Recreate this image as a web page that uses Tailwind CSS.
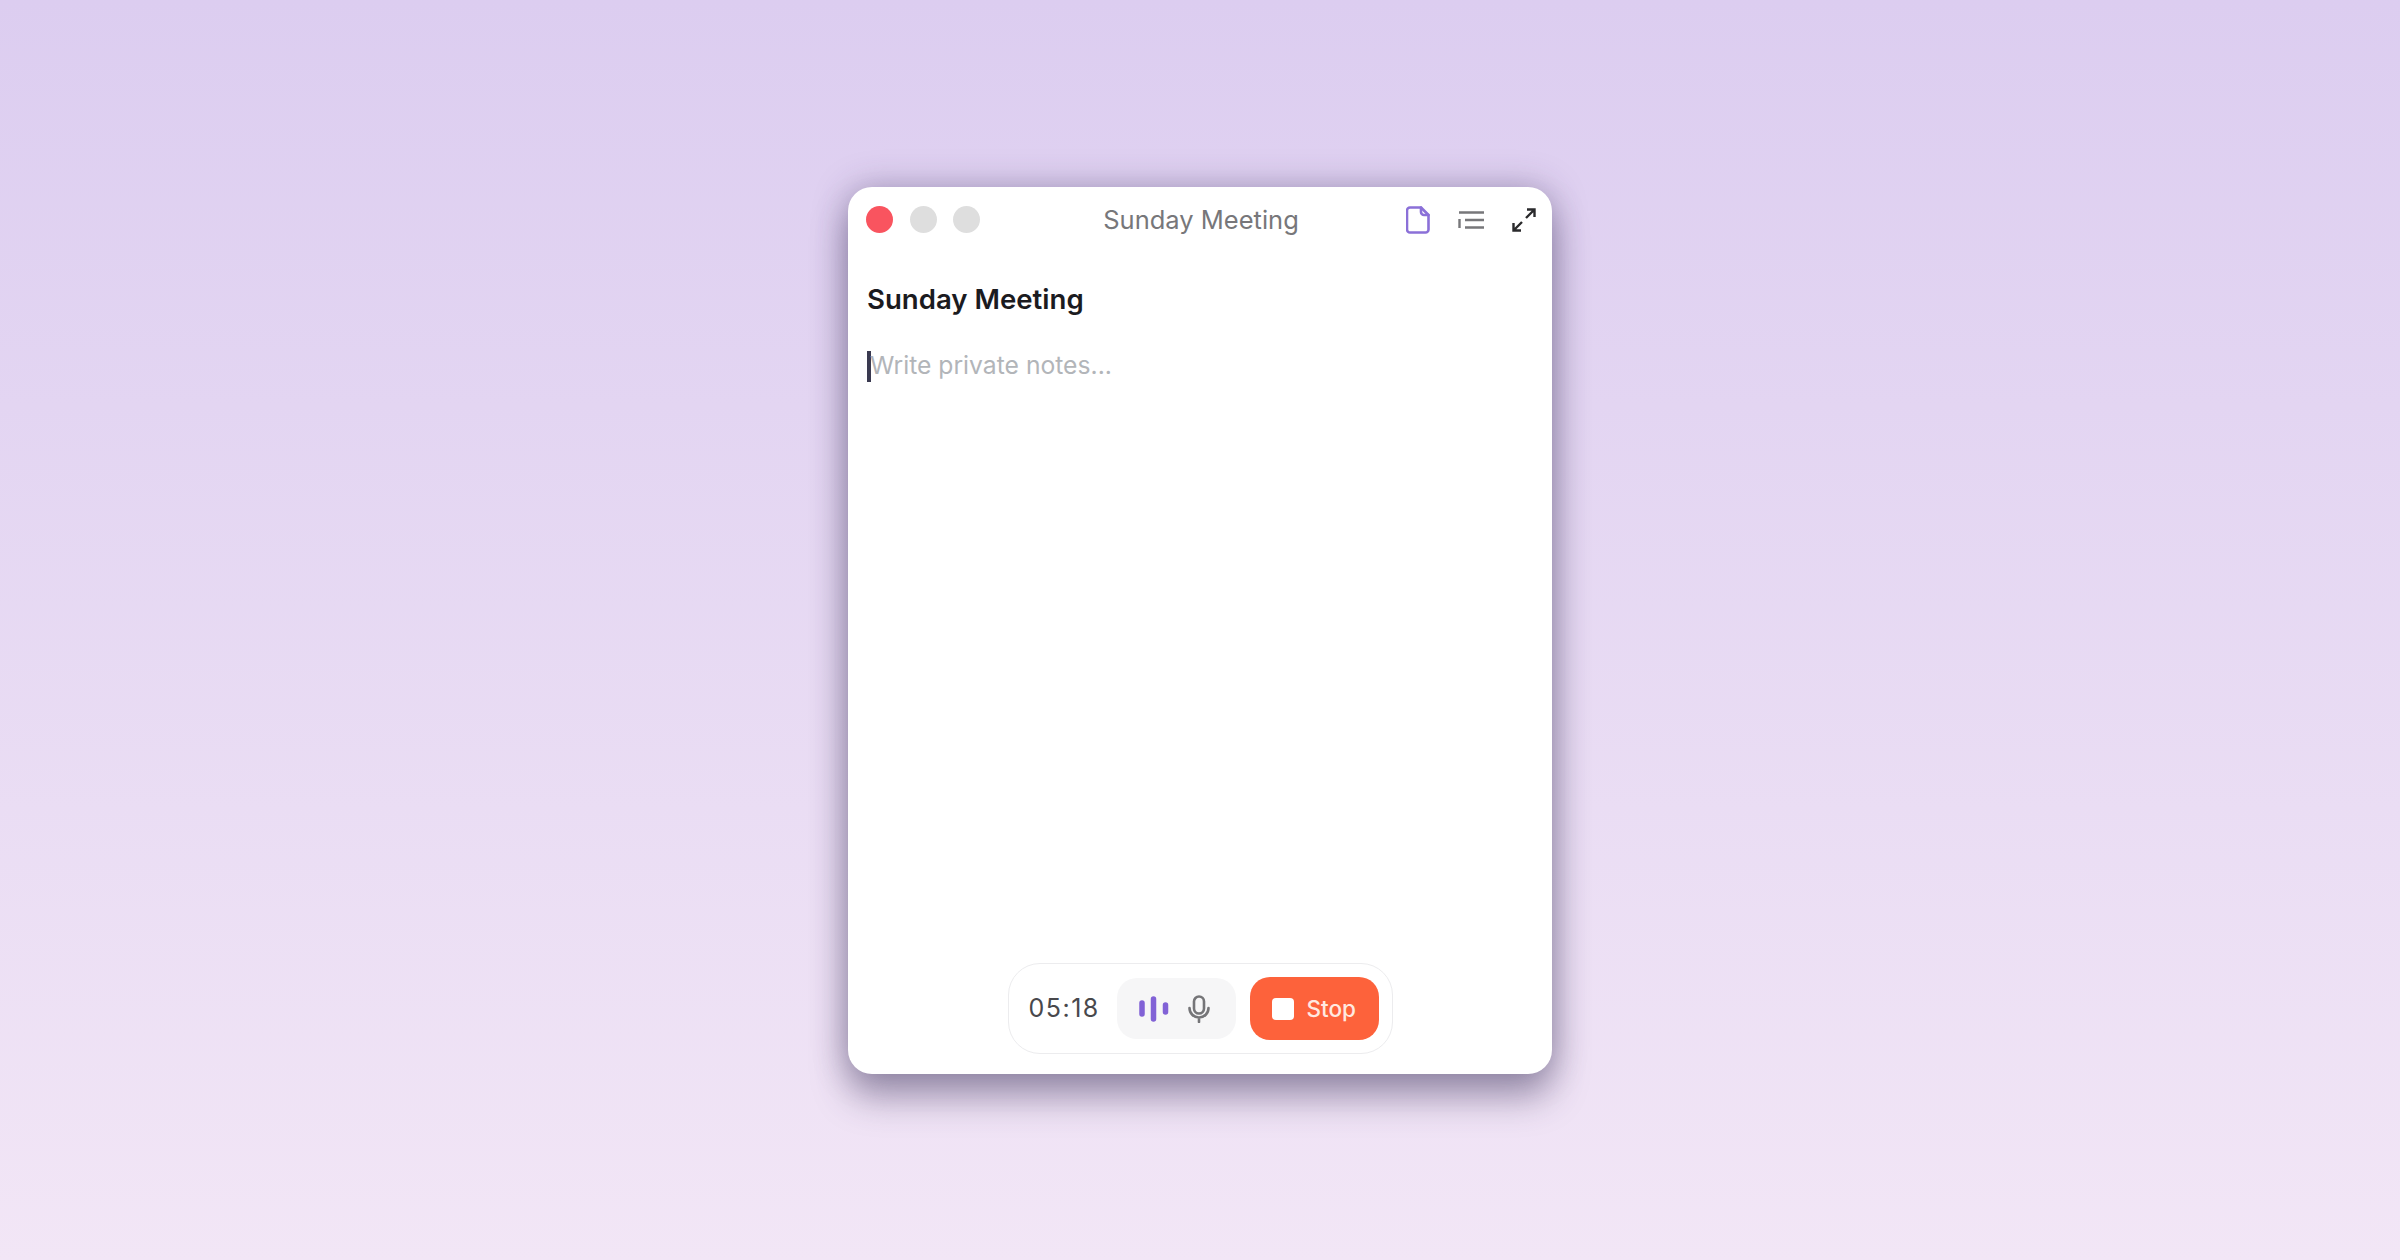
<!DOCTYPE html>
<html>
<head>
<meta charset="utf-8">
<script src="https://cdn.jsdelivr.net/npm/@tailwindcss/browser@4"></script>
</head>
<body class="m-0">
<div class="w-[2400px] h-[1260px] pt-[1px] flex items-center justify-center overflow-hidden bg-gradient-to-b from-[#dccdf0] to-[#f2e6f6] font-['Inter',sans-serif]">
  <div class="w-[704px] h-[887px] flex flex-col bg-white rounded-[24px] shadow-[0_24px_36px_rgba(60,50,90,0.4),0_0_34px_rgba(60,50,90,0.34)]">
    <div class="flex items-center h-[64px] pl-[18px] pr-[16px] shrink-0">
      <div class="flex-1 flex gap-[16px]">
        <div class="w-[27px] h-[27px] rounded-full bg-[#f9545f]"></div>
        <div class="w-[27px] h-[27px] rounded-full bg-[#dedede] ml-[0.5px]"></div>
        <div class="w-[27px] h-[27px] rounded-full bg-[#dedede]"></div>
      </div>
      <div class="text-center text-[25.5px] text-[#77777a] pt-[2px]">Sunday Meeting</div>
      <div class="flex-1 flex justify-end items-center gap-[28px] pt-[2px]">
        <svg width="24" height="28" viewBox="0 0 24 28" fill="none" stroke="#8b70d8" stroke-width="2.6" stroke-linejoin="round" stroke-linecap="round"><path d="M4 1.500h11l7.500 7.500v14.500a3 3 0 0 1-3 3H4a3 3 0 0 1-3-3V4.500a3 3 0 0 1 3-3z"/><path d="M15 1.500v4.500a3 3 0 0 0 3 3h4.500"/></svg>
        <svg width="26" height="18" viewBox="0 0 26 18" fill="none" stroke="#77777a" stroke-width="2.4"><path d="M1 1.500h25M7 9h19M7 16.500h19M1.500 8v9"/></svg>
        <svg width="24" height="24" viewBox="0 0 24 24" fill="none" stroke="#2a2a2c" stroke-width="2.400"><path d="M14 10 23 1M15 1.500h7.500V9M10 14l-9 9M1.500 15v7.500H9"/></svg>
      </div>
    </div>
    <div class="flex-1 px-[19px] pt-[28px]">
      <div class="text-[27.6px] leading-[40px] font-semibold text-[#1b1b1f]">Sunday Meeting</div>
      <div class="flex items-center mt-[31px] h-[32px]">
        <div class="w-[4px] h-[31px] bg-[#3a3a50]"></div>
        <div class="text-[24.7px] text-[#b2b5b9] -ml-[1px]">Write private notes...</div>
      </div>
    </div>
    <div class="flex justify-center pb-[20px]">
      <div class="flex items-center w-[385px] h-[91px] border border-[#ececee] rounded-[32px] pl-[20px]">
        <div class="text-[25px] text-[#48484c] tracking-[1.5px] w-[88px]">05:18</div>
        <div class="flex items-center h-[61px] w-[119px] rounded-[20px] bg-[#f6f6f7] pl-[22px] gap-[19px]">
          <svg width="30" height="26" viewBox="0 0 30 26" fill="none" stroke="#8162d6" stroke-width="5.500" stroke-linecap="round"><path d="M3 7v11M14.500 3v20M26.500 9v7"/></svg>
          <svg width="22" height="28" viewBox="0 0 22 28" fill="none" stroke="#757578" stroke-width="2.600" stroke-linecap="round"><rect x="6" y="1.500" width="10" height="17" rx="5"/><path d="M1.500 13a9.500 9.500 0 0 0 19 0M11 23v4"/></svg>
        </div>
        <div class="flex items-center h-[63px] w-[129px] ml-[14px] rounded-[20px] bg-[#fd623b] pl-[22px] gap-[13px]">
          <div class="w-[22px] h-[22px] rounded-[4px] bg-white"></div>
          <div class="text-[22.5px] font-medium text-[#ffe9e0]">Stop</div>
        </div>
      </div>
    </div>
  </div>
</div>
</body>
</html>
